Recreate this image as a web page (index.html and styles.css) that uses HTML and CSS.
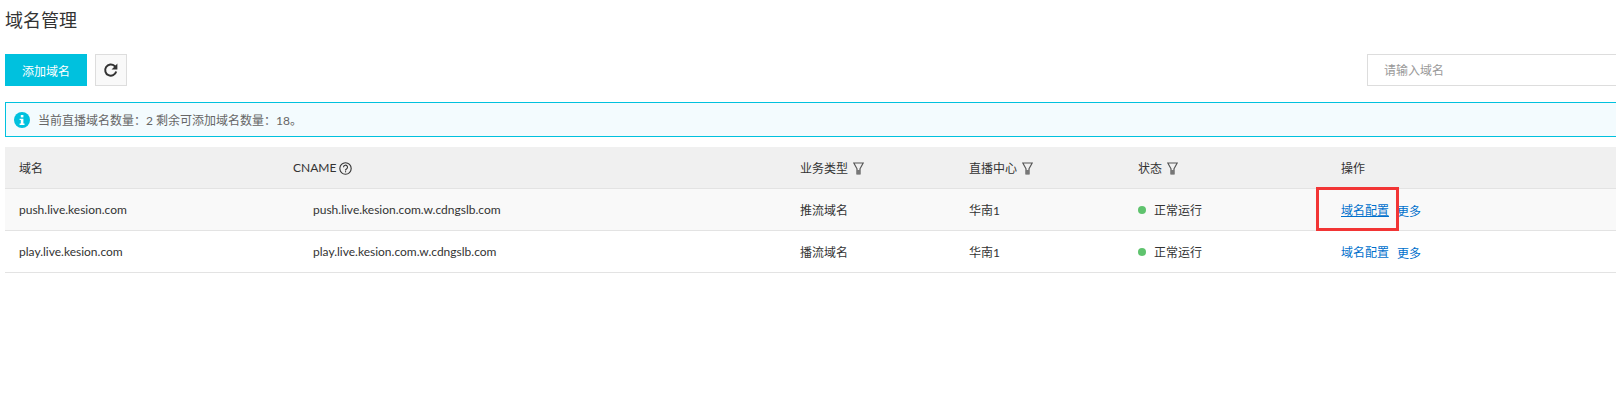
FILE: index.html
```html
<!DOCTYPE html>
<html lang="zh">
<head>
<meta charset="utf-8">
<title>域名管理</title>
<link rel="stylesheet" href="styles.css">
</head>
<body>
<main class="page">
  <h1 class="title">域名管理</h1>
  <div class="toolbar">
    <button class="btn-primary">添加域名</button>
    <button class="btn-refresh" aria-label="刷新">
      <svg width="16" height="16" viewBox="0 0 16 16"><path d="M13.2 9.6A5.6 5.6 0 1 1 11.6 4L12.6 5" fill="none" stroke="#333" stroke-width="2"/><path d="M14.4 1.6V7.4H8.6Z" fill="#333"/></svg>
    </button>
    <input class="search" placeholder="请输入域名">
  </div>
  <div class="alert">
    <svg class="alert-icon" width="16" height="16" viewBox="0 0 16 16"><circle cx="8" cy="8" r="8" fill="#00c1de"/><rect x="6.8" y="3" width="2.6" height="2.4" fill="#fff"/><path d="M5.6 6.7H9.4V11.6H10.5V13H5.6V11.6H6.8V8.1H5.6Z" fill="#fff"/></svg>
    <span>当前直播域名数量：2 剩余可添加域名数量：18。</span>
  </div>
  <div class="table">
    <div class="row head">
      <div>域名</div>
      <div class="cell-flex">CNAME
        <svg class="help" width="13" height="13" viewBox="0 0 13 13"><circle cx="6.5" cy="6.5" r="5.7" fill="none" stroke="#333" stroke-width="1.1"/><path d="M4.5 5.2A2 2 0 1 1 7.5 6.9C6.8 7.3 6.5 7.6 6.5 8.4" fill="none" stroke="#333" stroke-width="1.1"/><rect x="6" y="9.2" width="1.1" height="1.1" fill="#333"/></svg>
      </div>
      <div class="cell-flex">业务类型 <svg class="filter" width="11" height="13" viewBox="0 0 11 13"><path d="M.8 1H10.2L7 6.8V12H4V6.8Z" fill="none" stroke="#555" stroke-width="1.2"/><rect x="4" y="8" width="3" height="4" fill="#777"/></svg></div>
      <div class="cell-flex">直播中心 <svg class="filter" width="11" height="13" viewBox="0 0 11 13"><path d="M.8 1H10.2L7 6.8V12H4V6.8Z" fill="none" stroke="#555" stroke-width="1.2"/><rect x="4" y="8" width="3" height="4" fill="#777"/></svg></div>
      <div class="cell-flex">状态 <svg class="filter" width="11" height="13" viewBox="0 0 11 13"><path d="M.8 1H10.2L7 6.8V12H4V6.8Z" fill="none" stroke="#555" stroke-width="1.2"/><rect x="4" y="8" width="3" height="4" fill="#777"/></svg></div>
      <div>操作</div>
    </div>
    <div class="row body odd">
      <div>push.live.kesion.com</div>
      <div class="cname">push.live.kesion.com.w.cdngslb.com</div>
      <div>推流域名</div>
      <div>华南1</div>
      <div class="status"><i class="dot"></i>正常运行</div>
      <div class="actions"><a class="link hl">域名配置</a><a class="link more">更多</a>
        <span class="mark"></span></div>
    </div>
    <div class="row body">
      <div>play.live.kesion.com</div>
      <div class="cname">play.live.kesion.com.w.cdngslb.com</div>
      <div>播流域名</div>
      <div>华南1</div>
      <div class="status"><i class="dot"></i>正常运行</div>
      <div class="actions"><a class="link">域名配置</a><a class="link more">更多</a></div>
    </div>
  </div>
</main>
</body>
</html>
```
FILE: styles.css
```css
* { box-sizing: border-box; }
html, body { margin: 0; height: 417px; overflow: hidden; background: #fff; }
body {
  font-family: Lato, "Noto Sans CJK SC", sans-serif;
  font-size: 12px;
  color: #333;
}
.page { width: 1640px; padding: 8px 0 0 5px; }
.title {
  margin: 0;
  height: 24px;
  font-size: 18px;
  font-weight: 400;
  line-height: 24px;
  color: #333;
}
.toolbar { display: flex; align-items: flex-start; margin-top: 22px; height: 32px; }
.btn-primary {
  width: 82px;
  height: 32px;
  border: 0;
  padding: 0;
  background: #00c1de;
  color: #fff;
  font: inherit;
}
.btn-refresh {
  display: flex;
  align-items: center;
  justify-content: center;
  width: 32px;
  height: 32px;
  margin-left: 8px;
  padding: 0;
  background: #f9f9f9;
  border: 1px solid #ddd;
}
.search {
  width: 260px;
  height: 32px;
  margin-left: 1240px;
  padding: 0 16px;
  border: 1px solid #ddd;
  font: inherit;
  outline: none;
}
.search::placeholder { color: #999; opacity: 1; }
.alert {
  display: flex;
  align-items: center;
  gap: 8px;
  height: 35px;
  margin-top: 16px;
  padding-left: 8px;
  background: #f3fbfe;
  border: 1px solid #00c1de;
  color: #666;
}
.table { margin-top: 10px; }
.row {
  display: grid;
  grid-template-columns: 274px 507px 169px 169px 203px 1fr;
  align-items: center;
  padding-left: 14px;
  border-bottom: 1px solid #e3e3e3;
}
.head { height: 42px; background: #f0f0f0; }
.body { height: 42px; }
.odd { background: #f9f9f9; }
.cell-flex { display: flex; align-items: center; gap: 3px; }
.help { margin-top: 2px; }
.filter { margin: 2px 0 0 2px; }
.cname { padding-left: 20px; }
.status { display: flex; align-items: center; }
.dot {
  width: 8px;
  height: 8px;
  margin-right: 8px;
  border-radius: 50%;
  background: #5fc36e;
}
.actions { position: relative; display: flex; align-items: center; }
.link { color: #0070cc; }
.hl { text-decoration: underline; }
.more { margin: 2px 0 0 8px; }
.mark {
  position: absolute;
  left: -25px;
  top: -13px;
  width: 83px;
  height: 44px;
  border: 3px solid #f23535;
}
```
